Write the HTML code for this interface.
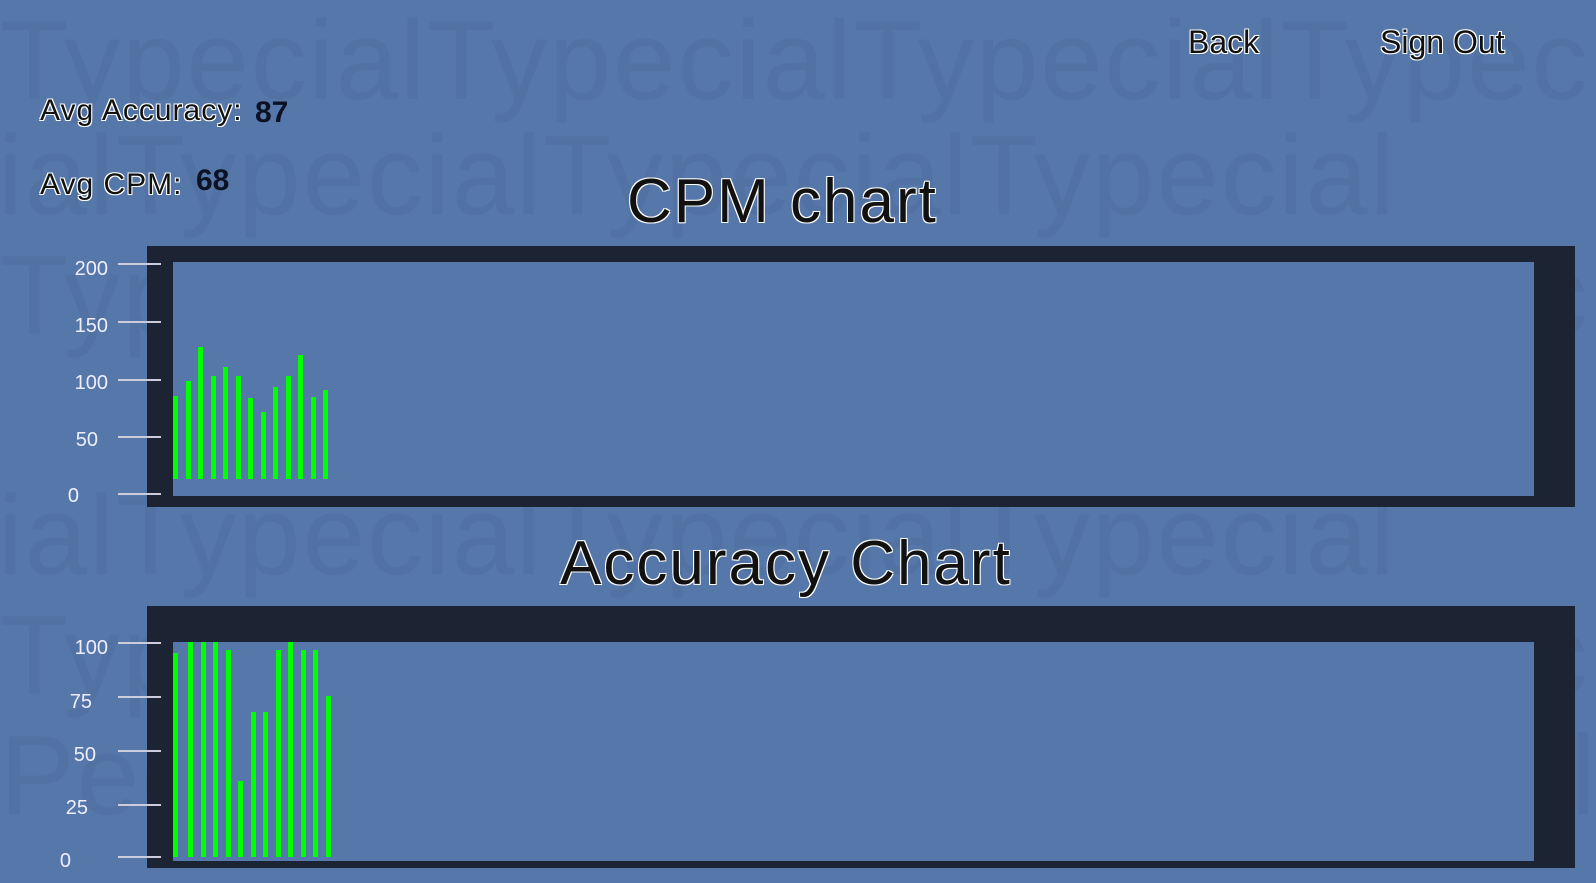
<!DOCTYPE html>
<html><head><meta charset="utf-8"><style>
body{margin:0;width:1596px;height:883px;overflow:hidden;background:#5577a9;font-family:"Liberation Sans",sans-serif;position:relative}
.wm{position:absolute;left:0;white-space:nowrap;font-size:112px;color:rgba(30,50,90,0.07);letter-spacing:2px;line-height:1}
.o{position:absolute;color:#111;text-shadow:1px 1px 0 #fff,-1px -1px 0 #fff,1px -1px 0 #fff,-1px 1px 0 #fff;white-space:nowrap}
.n{position:absolute;color:#0b1224;font-weight:bold;font-size:30px}
.box{position:absolute;background:#1c2333}
.in{position:absolute;background:#5577a9}
.b{position:absolute;background:#00ff00;width:5px}
.t{position:absolute;height:2px;width:43px;left:118px;background:#ccd}
.l{position:absolute;color:#eef;font-size:20px;text-align:right;width:66px;left:42px;line-height:20px}
</style></head><body>
<div class="wm" style="top:5px">TypecialTypecialTypecialTypecial</div>
<div class="wm" style="top:120px;left:-60px">cialTypecialTypecialTypecial</div>
<div class="wm" style="top:240px">TypecialTypecialTypecialTypecial</div>
<div class="wm" style="top:480px;left:-60px">cialTypecialTypecialTypecial</div>
<div class="wm" style="top:600px">TypecialTypecialTypecialTypecial</div>
<div class="wm" style="top:720px">PecialTypecialTypecialTypecial</div>

<div class="o" style="left:1188px;top:24px;font-size:32px">Back</div>
<div class="o" style="left:1380px;top:24px;font-size:32px">Sign Out</div>
<div class="o" style="left:40px;top:94px;font-size:30px;letter-spacing:1px">Avg Accuracy:</div>
<div class="n" style="left:255px;top:96px">87</div>
<div class="o" style="left:40px;top:168px;font-size:30px;letter-spacing:1px">Avg CPM:</div>
<div class="n" style="left:196px;top:164px">68</div>
<div class="o" style="left:627px;top:166px;font-size:62px;letter-spacing:2px">CPM chart</div>
<div class="o" style="left:560px;top:528px;font-size:62px;letter-spacing:2px">Accuracy Chart</div>

<div class="box" style="left:147px;top:246px;width:1428px;height:261px"></div>
<div class="in" style="left:173px;top:262px;width:1361px;height:234px"></div>
<div class="box" style="left:147px;top:606px;width:1428px;height:262px"></div>
<div class="in" style="left:173px;top:642px;width:1361px;height:219px"></div>

<div class="t" style="top:263px"></div><div class="l" style="top:259px">200</div>
<div class="t" style="top:321px"></div><div class="l" style="top:316px">150</div>
<div class="t" style="top:379px"></div><div class="l" style="top:373px">100</div>
<div class="t" style="top:436px"></div><div class="l" style="top:430px;width:56px">50</div>
<div class="t" style="top:493px"></div><div class="l" style="top:486px;width:37px">0</div>

<div class="t" style="top:642px"></div><div class="l" style="top:638px">100</div>
<div class="t" style="top:696px"></div><div class="l" style="top:692px;width:50px">75</div>
<div class="t" style="top:750px"></div><div class="l" style="top:745px;width:54px">50</div>
<div class="t" style="top:804px"></div><div class="l" style="top:798px;width:46px">25</div>
<div class="t" style="top:856px"></div><div class="l" style="top:851px;width:29px">0</div>

<div class="b" style="left:173px;top:396px;height:83px"></div>
<div class="b" style="left:186px;top:381px;height:98px"></div>
<div class="b" style="left:198px;top:347px;height:132px"></div>
<div class="b" style="left:211px;top:376px;height:103px"></div>
<div class="b" style="left:223px;top:367px;height:112px"></div>
<div class="b" style="left:236px;top:376px;height:103px"></div>
<div class="b" style="left:248px;top:398px;height:81px"></div>
<div class="b" style="left:261px;top:412px;height:67px"></div>
<div class="b" style="left:273px;top:387px;height:92px"></div>
<div class="b" style="left:286px;top:376px;height:103px"></div>
<div class="b" style="left:298px;top:355px;height:124px"></div>
<div class="b" style="left:311px;top:397px;height:82px"></div>
<div class="b" style="left:323px;top:390px;height:89px"></div>

<div class="b" style="left:173px;top:653px;height:204px"></div>
<div class="b" style="left:188px;top:642px;height:215px"></div>
<div class="b" style="left:201px;top:642px;height:215px"></div>
<div class="b" style="left:213px;top:642px;height:215px"></div>
<div class="b" style="left:226px;top:650px;height:207px"></div>
<div class="b" style="left:238px;top:781px;height:76px"></div>
<div class="b" style="left:251px;top:712px;height:145px"></div>
<div class="b" style="left:263px;top:712px;height:145px"></div>
<div class="b" style="left:276px;top:650px;height:207px"></div>
<div class="b" style="left:288px;top:642px;height:215px"></div>
<div class="b" style="left:301px;top:650px;height:207px"></div>
<div class="b" style="left:313px;top:650px;height:207px"></div>
<div class="b" style="left:326px;top:696px;height:161px"></div>
</body></html>
